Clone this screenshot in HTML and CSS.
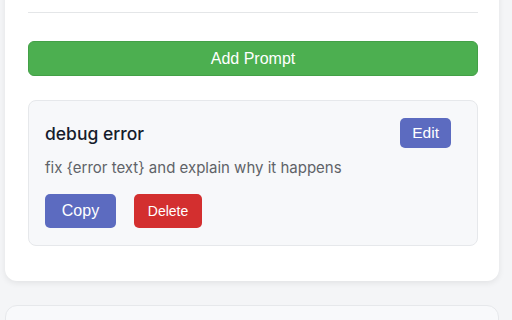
FILE: index.html
```html
<!DOCTYPE html>
<html lang="en">
<head>
  <meta charset="UTF-8">
  <meta name="viewport" content="width=device-width, initial-scale=1.0">
  <title>Prompt Library</title>
  <link rel="stylesheet" href="styles.css">
</head>
<body>
  <div class="page">
    <div class="panel">
      <hr class="divider">
      <button class="add-btn">Add Prompt</button>

      <div class="prompt-list">
        <div class="prompt-item">
          <div class="prompt-head">
            <h3>debug error</h3>
            <button class="edit-btn">Edit</button>
          </div>
          <p class="prompt-text">fix {error text} and explain why it happens</p>
          <div class="prompt-actions">
            <button class="copy-btn">Copy</button>
            <button class="delete-btn">Delete</button>
          </div>
        </div>
      </div>
    </div>

    <div class="panel panel-next"></div>
  </div>
</body>
</html>
```

FILE: styles.css
```css
/* Reset */
* {
  margin: 0;
  padding: 0;
  box-sizing: border-box;
}

body {
  font-family: 'Inter', 'Noto Sans', sans-serif;
  background-color: #f4f5f7;
  color: #1a2233;
  overflow: hidden;
}

.page {
  padding: 0 13px 0 5px;
  margin-top: -40px;
}

/* Panel */
.panel {
  background-color: #ffffff;
  border-radius: 12px;
  box-shadow: 0 2px 6px rgba(0, 0, 0, 0.08);
  padding: 52px 21px 35px 23px;
}

.panel-next {
  margin-top: 24px;
  height: 60px;
  background-color: #f8f9fb;
  border: 1px solid #e6e8eb;
  box-shadow: none;
}

.divider {
  border: none;
  border-top: 1px solid #e4e6e8;
  margin-bottom: 28px;
}

button {
  font-family: 'Liberation Sans', Arial, sans-serif;
  color: #ffffff;
  border: none;
  border-radius: 5px;
  cursor: pointer;
}

.add-btn {
  display: block;
  width: 100%;
  height: 35px;
  font-size: 16px;
  background-color: #4caf50;
  border: 1px solid #43a047;
  border-radius: 6px;
}

/* Prompt items */
.prompt-list {
  margin-top: 24px;
}

.prompt-item {
  background-color: #f7f8fa;
  border: 1px solid #e6e8eb;
  border-radius: 8px;
  padding: 17px 26px 17px 16px;
}

.prompt-head {
  display: flex;
  justify-content: space-between;
  align-items: center;
  height: 30px;
}

.prompt-head h3 {
  font-size: 17.5px;
  font-weight: 500;
  color: #151c2c;
}

.edit-btn {
  height: 30px;
  padding: 0 12px;
  font-size: 15.5px;
  background-color: #5c6bc0;
}

.prompt-text {
  margin-top: 10px;
  font-size: 15px;
  line-height: 20px;
  color: #5f6368;
}

.prompt-actions {
  display: flex;
  gap: 18px;
  margin-top: 16px;
}

.copy-btn {
  height: 34px;
  width: 71px;
  font-size: 16px;
  background-color: #5c6bc0;
}

.delete-btn {
  height: 34px;
  width: 68px;
  font-size: 14px;
  background-color: #d32f2f;
}
```
